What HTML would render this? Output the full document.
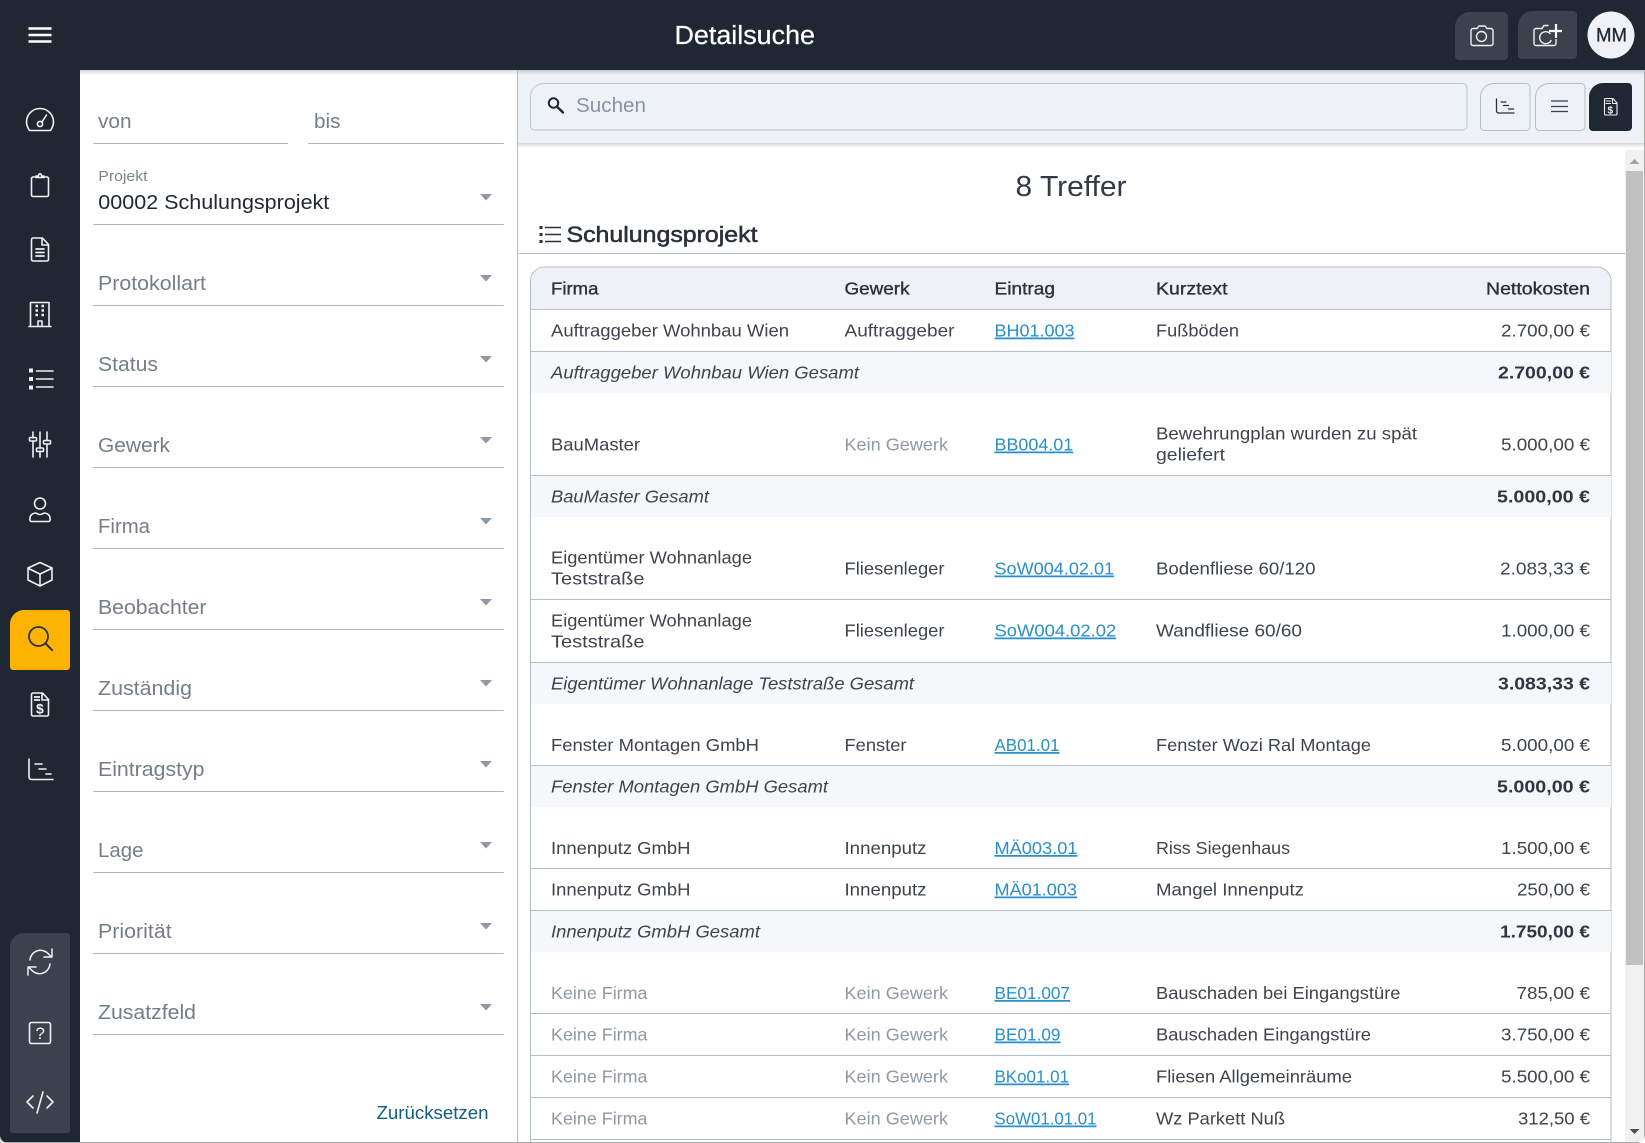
<!DOCTYPE html>
<html lang="de"><head><meta charset="utf-8"><title>Detailsuche</title>
<style>
html,body{margin:0;padding:0;background:#fff;overflow:hidden;width:1645px;height:1143px}
svg{position:absolute;left:0;top:0;display:block}
text{font-family:"Liberation Sans",sans-serif;font-size:17.5px;fill:#3d444e}
.f{font-size:20.5px;fill:#737e8a}
.h{fill:#2a313b;stroke:#2a313b;stroke-width:.35px}
.g{fill:#8e99a6}
.a{fill:#2a8fc9;text-decoration:underline}
.i{font-style:italic}
.b{font-weight:bold;fill:#2f3640}
.ic{fill:none;stroke:#eef1f6;stroke-width:1.6;stroke-linecap:round;stroke-linejoin:round}
.dk{fill:none;stroke:#2a313b;stroke-width:1.5;stroke-linecap:round;stroke-linejoin:round}
</style></head><body>
<svg width="1645" height="1143" viewBox="0 0 1645 1143" xmlns="http://www.w3.org/2000/svg">
<defs>
<linearGradient id="s1" x1="0" y1="0" x2="0" y2="1"><stop offset="0" stop-color="#000" stop-opacity=".16"/><stop offset="1" stop-color="#000" stop-opacity="0"/></linearGradient>
</defs>
<rect width="1645" height="1143" fill="#1f2732"/>
<path d="M80 70H1645V1143H80Z" fill="#fff"/>
<rect x="518" y="70" width="1127" height="73" fill="#eef1f6"/>
<rect x="80" y="70" width="1565" height="5" fill="url(#s1)"/>
<rect x="518" y="143" width="1127" height="5" fill="url(#s1)"/>
<rect x="517" y="70" width="1" height="1073" fill="#b5bfca"/>

<!-- header -->
<text x="674.5" y="44" style="font-size:25.5px;fill:#fff;stroke:#fff;stroke-width:.25px" textLength="140.5" lengthAdjust="spacingAndGlyphs">Detailsuche</text>
<path d="M1470 12H1503a5 5 0 0 1 5 5V56a4 4 0 0 1-4 4H1459a4 4 0 0 1-4-4V27a15 15 0 0 1 15-15Z" fill="#3a424d"/>
<path d="M1533 11H1573a4 4 0 0 1 4 4V55a4 4 0 0 1-4 4H1522a4 4 0 0 1-4-4V26a15 15 0 0 1 15-15Z" fill="#3a424d"/>
<circle cx="1611" cy="35" r="23.5" fill="#eef1f6"/>
<text x="1596" y="41.5" style="font-size:19px;fill:#1f2732;stroke:#1f2732;stroke-width:.3px" textLength="31" lengthAdjust="spacingAndGlyphs">MM</text>
<path class="ic" d="M1471 30.5a2 2 0 0 1 2-2h4l2-2.5h6l2 2.5h4a2 2 0 0 1 2 2v13a2 2 0 0 1-2 2h-18a2 2 0 0 1-2-2Z" style="stroke-width:1.4"/>
<circle class="ic" cx="1481.5" cy="36.5" r="5" style="stroke-width:1.4"/>
<path class="ic" d="M1548 25.5h-4l-2 3h-6a2 2 0 0 0-2 2v13a2 2 0 0 0 2 2h18a2 2 0 0 0 2-2v-4M1550 33.5a6 6 0 1 0 1 7" style="stroke-width:1.4"/>
<path d="M1556 24v14M1549 31h13" fill="none" stroke="#fff" stroke-width="2.2"/>

<!-- sidebar -->
<path d="M24 933H67a3 3 0 0 1 3 3V1130a3 3 0 0 1-3 3H13a3 3 0 0 1-3-3V947a14 14 0 0 1 14-14Z" fill="#3a424d"/>
<path d="M28.5 28.5h23M28.5 35h23M28.5 41.5h23" fill="none" stroke="#fff" stroke-width="2.4"/>
<g class="ic">
<path d="M29.5 130.5C27.5 127.5 26.5 125 26.5 122C26.5 114.5 32.5 108.5 40 108.5S53.5 114.5 53.5 122C53.5 125 52.5 127.5 50.5 130.5Z"/>
<circle cx="40" cy="124" r="2.6"/><path d="M42 122L46.5 115"/>
<path d="M36 177h-3a1.500 1.500 0 0 0-1.500 1.500v16.500a1.500 1.500 0 0 0 1.500 1.500h14a1.500 1.500 0 0 0 1.500-1.500v-16.500a1.500 1.500 0 0 0-1.500-1.500h-3M36 177.500v-1.500h2.500c0-3 3-3 3 0h2.500v1.500Z"/>
<path d="M33 238h9.500l6 6.500v15a1.500 1.500 0 0 1-1.500 1.500h-14a1.500 1.500 0 0 1-1.500-1.500v-20a1.500 1.500 0 0 1 1.500-1.500ZM42 238.500v6.500h6.500"/>
<path d="M36 249h8M36 252.500h8M36 256h8" style="stroke-width:1.700"/>
<path d="M30.500 326.500v-24h18.500v24M29 326.500h22M38 326v-5h4v5"/>
<path d="M35.500 306h2.500M41.500 306h2.500M35.500 310.500h2.500M41.500 310.500h2.500M35.500 315h2.500M41.500 315h2.500" style="stroke-width:2.600;stroke-linecap:butt"/>
<path d="M36.500 371h16.500M36.500 379h16.500M36.500 387h16.500"/>
<path d="M33 432v6M33 441v16M40 432v16M40 451v6M47 432v8M47 444v13"/>
<rect x="29.500" y="437.500" width="7" height="3.500" rx="1"/><rect x="36.500" y="448" width="7" height="3.500" rx="1"/><rect x="43.500" y="440.500" width="7" height="3.500" rx="1"/>
<circle cx="40" cy="503.500" r="5.500"/><path d="M31.500 521.500h17a1.500 1.500 0 0 0 1.500-1.500v-2c0-3-3-5-6-5-1.500 1-2.500 1.500-4 1.500s-2.500-.5-4-1.500c-3 0-6 2-6 5v2a1.500 1.500 0 0 0 1.500 1.500Z"/>
<path d="M40 562.500L52 568v12l-12 6-12-6v-12ZM28.500 568.500L40 574l11.500-5.500M40 574v11.500"/>
<path d="M33 693h9.500l6 6.500v15a1.500 1.500 0 0 1-1.500 1.500h-14a1.500 1.500 0 0 1-1.500-1.500v-20a1.500 1.500 0 0 1 1.500-1.500ZM42 693.500v6.500h6.500"/>
<path d="M34 697h6M34 700h6" style="stroke-width:1.700;stroke-linecap:butt"/>
<path d="M29 759v18a2.500 2.500 0 0 0 2.500 2.500h21.500M35 764h7M39 769h7M46 774h5"/>
<path d="M30 960a10.500 10.500 0 0 1 18-6.500l3.500 3.500M52 949v8h-8M50 964a10.500 10.500 0 0 1-18 6.500l-3.500-3.500M28 975v-8h8" style="stroke-width:1.500"/>
<rect x="29.500" y="1022.500" width="21" height="21" rx="2"/>
<path d="M33 1096l-6 6 6 6M47 1096l6 6-6 6M43 1092l-6 21"/>
</g>
<path d="M29 368.500h4v4h-4ZM29 377h4v4h-4ZM29 385.500h4v4h-4Z" fill="#eef1f6"/>
<path d="M24 610H67a3 3 0 0 1 3 3V667a3 3 0 0 1-3 3H13a3 3 0 0 1-3-3V624a14 14 0 0 1 14-14Z" fill="#ffb300"/>
<circle cx="38.500" cy="636.500" r="9.500" fill="none" stroke="#2a313b" stroke-width="1.800"/><path d="M45.500 643.500L52 650" stroke="#2a313b" stroke-width="2" stroke-linecap="round"/>
<text x="36" y="713.500" style="font-size:14px;fill:#eef1f6;font-weight:bold">$</text>
<text x="35.500" y="1039" style="font-size:17px;fill:#eef1f6">?</text>

<!-- form -->
<g fill="#aeb8c5">
<rect x="93" y="143" width="195" height="1"/><rect x="308" y="143" width="196" height="1"/>
<rect x="93" y="224" width="411" height="1"/><rect x="93" y="305" width="411" height="1"/><rect x="93" y="386" width="411" height="1"/><rect x="93" y="467" width="411" height="1"/><rect x="93" y="548" width="411" height="1"/><rect x="93" y="629" width="411" height="1"/><rect x="93" y="710" width="411" height="1"/><rect x="93" y="791" width="411" height="1"/><rect x="93" y="872" width="411" height="1"/><rect x="93" y="953" width="411" height="1"/><rect x="93" y="1034" width="411" height="1"/>
</g>
<g fill="#8f99a6">
<path d="M480 194h12l-6 6.500Z"/><path d="M480 275h12l-6 6.500Z"/><path d="M480 356h12l-6 6.500Z"/><path d="M480 437h12l-6 6.500Z"/><path d="M480 518h12l-6 6.500Z"/><path d="M480 599h12l-6 6.500Z"/><path d="M480 680h12l-6 6.500Z"/><path d="M480 761h12l-6 6.500Z"/><path d="M480 842h12l-6 6.500Z"/><path d="M480 923h12l-6 6.500Z"/><path d="M480 1004h12l-6 6.500Z"/>
</g>
<text class="f" x="98" y="128" textLength="33.500" lengthAdjust="spacingAndGlyphs">von</text>
<text class="f" x="314" y="128" textLength="26.500" lengthAdjust="spacingAndGlyphs">bis</text>
<text x="98.300" y="181" style="font-size:15px;fill:#7a8592" textLength="49.200" lengthAdjust="spacingAndGlyphs">Projekt</text>
<text class="f" x="98.300" y="209" style="fill:#1f2732" textLength="231" lengthAdjust="spacingAndGlyphs">00002 Schulungsprojekt</text>
<text class="f" x="98" y="290" textLength="108" lengthAdjust="spacingAndGlyphs">Protokollart</text>
<text class="f" x="98" y="371" textLength="60" lengthAdjust="spacingAndGlyphs">Status</text>
<text class="f" x="98" y="452" textLength="72" lengthAdjust="spacingAndGlyphs">Gewerk</text>
<text class="f" x="98" y="533" textLength="52" lengthAdjust="spacingAndGlyphs">Firma</text>
<text class="f" x="98" y="614" textLength="108.500" lengthAdjust="spacingAndGlyphs">Beobachter</text>
<text class="f" x="98" y="695" textLength="94" lengthAdjust="spacingAndGlyphs">Zuständig</text>
<text class="f" x="98" y="776" textLength="106.500" lengthAdjust="spacingAndGlyphs">Eintragstyp</text>
<text class="f" x="98" y="857" textLength="45.500" lengthAdjust="spacingAndGlyphs">Lage</text>
<text class="f" x="98" y="938" textLength="73.700" lengthAdjust="spacingAndGlyphs">Priorität</text>
<text class="f" x="98" y="1019" textLength="98" lengthAdjust="spacingAndGlyphs">Zusatzfeld</text>
<text x="376.500" y="1119" style="font-size:18px;fill:#0f5d88" textLength="112" lengthAdjust="spacingAndGlyphs">Zurücksetzen</text>

<!-- toolbar -->
<path d="M543.500 83.500H1463a4 4 0 0 1 4 4V126a4 4 0 0 1-4 4H534.500a4 4 0 0 1-4-4V96.500a13 13 0 0 1 13-13Z" fill="#eef1f6" stroke="#bcc5d0"/>
<circle cx="553.500" cy="103" r="4.700" fill="none" stroke="#1f2732" stroke-width="2"/><path d="M557.300 107L563 112.500" stroke="#1f2732" stroke-width="2.400" stroke-linecap="round"/>
<text class="f" x="576" y="112" style="fill:#8a94a0" textLength="70" lengthAdjust="spacingAndGlyphs">Suchen</text>
<path d="M1494 83.500H1526a4 4 0 0 1 4 4V126.500a4 4 0 0 1-4 4H1484.500a4 4 0 0 1-4-4V97a13.500 13.500 0 0 1 13.500-13.500Z" fill="#eef1f6" stroke="#b5bfca"/>
<path d="M1549 83.500H1581a4 4 0 0 1 4 4V126.500a4 4 0 0 1-4 4H1539.500a4 4 0 0 1-4-4V97a13.500 13.500 0 0 1 13.500-13.500Z" fill="#eef1f6" stroke="#b5bfca"/>
<path d="M1603 83H1628a4 4 0 0 1 4 4V127a4 4 0 0 1-4 4H1593a4 4 0 0 1-4-4V97a14 14 0 0 1 14-14Z" fill="#1f2732"/>
<path class="dk" d="M1496.500 99v12a2 2 0 0 0 2 2h15.500M1501 102h5M1503.500 105.500h5M1508.500 109h5" style="stroke-width:1.300"/>
<path d="M1551 101h17M1551 106.500h17M1551 111.500h17" stroke="#3a424d" stroke-width="1.300" fill="none"/>
<path class="ic" d="M1605.500 98.500h7.500l4 4.500v11a1 1 0 0 1-1 1h-10.500a1 1 0 0 1-1-1v-14.500a1 1 0 0 1 1-1ZM1612.500 99v4.500h4.500M1606 101h4.500M1606 103.500h4.500" style="stroke-width:1.100"/>
<text x="1607.500" y="113.500" style="font-size:10px;fill:#eef1f6;font-weight:bold">$</text>

<!-- heading -->
<text x="1015.500" y="196" style="font-size:29px;fill:#333a44" textLength="111" lengthAdjust="spacingAndGlyphs">8 Treffer</text>
<path d="M545 227.500h16M545 234.500h16M545 241.500h16" stroke="#2a313b" stroke-width="1.600" fill="none"/>
<path d="M539.500 226h3v3h-3ZM539.500 233h3v3h-3ZM539.500 240h3v3h-3Z" fill="#2a313b"/>
<text x="566.500" y="242" style="font-size:22.500px;fill:#2a313b;stroke:#2a313b;stroke-width:.55px" textLength="191" lengthAdjust="spacingAndGlyphs">Schulungsprojekt</text>
<rect x="518" y="253" width="1107" height="1" fill="#b5bfca"/>

<!-- table -->
<path d="M530.500 1143V281a14 14 0 0 1 14-14H1597a14 14 0 0 1 14 14V1143" fill="#fff" stroke="#b5bfca"/>
<path d="M531 309V281a13.500 13.500 0 0 1 13.500-13.500H1597a13.500 13.500 0 0 1 13.500 13.500V309Z" fill="#eef1f6"/>
<g fill="#f6f7fa">
<rect x="531" y="351" width="1080" height="42"/><rect x="531" y="475" width="1080" height="42"/><rect x="531" y="662" width="1080" height="42"/><rect x="531" y="765" width="1080" height="42"/><rect x="531" y="910" width="1080" height="42"/>
</g>
<g fill="#b5bfca">
<rect x="531" y="309" width="1080" height="1"/><rect x="531" y="351" width="1080" height="1"/><rect x="531" y="475" width="1080" height="1"/><rect x="531" y="599" width="1080" height="1"/><rect x="531" y="662" width="1080" height="1"/><rect x="531" y="765" width="1080" height="1"/><rect x="531" y="868" width="1080" height="1"/><rect x="531" y="910" width="1080" height="1"/><rect x="531" y="1013" width="1080" height="1"/><rect x="531" y="1055" width="1080" height="1"/><rect x="531" y="1097" width="1080" height="1"/><rect x="531" y="1139" width="1080" height="1"/>
</g>
<text class="h" x="551" y="294.500" textLength="47.500" lengthAdjust="spacingAndGlyphs">Firma</text>
<text class="h" x="844.500" y="294.500" textLength="65" lengthAdjust="spacingAndGlyphs">Gewerk</text>
<text class="h" x="994.500" y="294.500" textLength="60.500" lengthAdjust="spacingAndGlyphs">Eintrag</text>
<text class="h" x="1156" y="294.500" textLength="71.500" lengthAdjust="spacingAndGlyphs">Kurztext</text>
<text class="h" x="1486" y="294.500" textLength="104" lengthAdjust="spacingAndGlyphs">Nettokosten</text>

<text x="551" y="336.500" textLength="238" lengthAdjust="spacingAndGlyphs">Auftraggeber Wohnbau Wien</text>
<text x="844.500" y="336.500" textLength="110" lengthAdjust="spacingAndGlyphs">Auftraggeber</text>
<text class="a" x="994.500" y="336.500" textLength="80" lengthAdjust="spacingAndGlyphs">BH01.003</text>
<text x="1156" y="336.500" textLength="83" lengthAdjust="spacingAndGlyphs">Fußböden</text>
<text x="1501" y="336.500" textLength="89" lengthAdjust="spacingAndGlyphs">2.700,00 €</text>
<text class="i" x="551" y="378.500" textLength="308" lengthAdjust="spacingAndGlyphs">Auftraggeber Wohnbau Wien Gesamt</text>
<text class="b" x="1498" y="378.500" textLength="92" lengthAdjust="spacingAndGlyphs">2.700,00 €</text>

<text x="551" y="450.500" textLength="89" lengthAdjust="spacingAndGlyphs">BauMaster</text>
<text class="g" x="844.500" y="450.500" textLength="103.500" lengthAdjust="spacingAndGlyphs">Kein Gewerk</text>
<text class="a" x="994.500" y="450.500" textLength="78.700" lengthAdjust="spacingAndGlyphs">BB004.01</text>
<text x="1156" y="439.500" textLength="261" lengthAdjust="spacingAndGlyphs">Bewehrungplan wurden zu spät</text>
<text x="1156" y="460.500" textLength="69" lengthAdjust="spacingAndGlyphs">geliefert</text>
<text x="1501" y="450.500" textLength="89" lengthAdjust="spacingAndGlyphs">5.000,00 €</text>
<text class="i" x="551" y="502.500" textLength="158" lengthAdjust="spacingAndGlyphs">BauMaster Gesamt</text>
<text class="b" x="1497" y="502.500" textLength="93" lengthAdjust="spacingAndGlyphs">5.000,00 €</text>

<text x="551" y="563.500" textLength="201" lengthAdjust="spacingAndGlyphs">Eigentümer Wohnanlage</text>
<text x="551" y="584.500" textLength="93.500" lengthAdjust="spacingAndGlyphs">Teststraße</text>
<text x="844.500" y="574.500" textLength="100" lengthAdjust="spacingAndGlyphs">Fliesenleger</text>
<text class="a" x="994.500" y="574.500" textLength="119.600" lengthAdjust="spacingAndGlyphs">SoW004.02.01</text>
<text x="1156" y="574.500" textLength="159.500" lengthAdjust="spacingAndGlyphs">Bodenfliese 60/120</text>
<text x="1500" y="574.500" textLength="90" lengthAdjust="spacingAndGlyphs">2.083,33 €</text>

<text x="551" y="626.500" textLength="201" lengthAdjust="spacingAndGlyphs">Eigentümer Wohnanlage</text>
<text x="551" y="647.500" textLength="93.500" lengthAdjust="spacingAndGlyphs">Teststraße</text>
<text x="844.500" y="636.500" textLength="100" lengthAdjust="spacingAndGlyphs">Fliesenleger</text>
<text class="a" x="994.500" y="636.500" textLength="121.700" lengthAdjust="spacingAndGlyphs">SoW004.02.02</text>
<text x="1156" y="636.500" textLength="146" lengthAdjust="spacingAndGlyphs">Wandfliese 60/60</text>
<text x="1501" y="636.500" textLength="89" lengthAdjust="spacingAndGlyphs">1.000,00 €</text>
<text class="i" x="551" y="689.500" textLength="363" lengthAdjust="spacingAndGlyphs">Eigentümer Wohnanlage Teststraße Gesamt</text>
<text class="b" x="1498" y="689.500" textLength="92" lengthAdjust="spacingAndGlyphs">3.083,33 €</text>

<text x="551" y="751" textLength="208" lengthAdjust="spacingAndGlyphs">Fenster Montagen GmbH</text>
<text x="844.500" y="751" textLength="62" lengthAdjust="spacingAndGlyphs">Fenster</text>
<text class="a" x="994.500" y="751" textLength="65" lengthAdjust="spacingAndGlyphs">AB01.01</text>
<text x="1156" y="751" textLength="215" lengthAdjust="spacingAndGlyphs">Fenster Wozi Ral Montage</text>
<text x="1501" y="751" textLength="89" lengthAdjust="spacingAndGlyphs">5.000,00 €</text>
<text class="i" x="551" y="792.500" textLength="277" lengthAdjust="spacingAndGlyphs">Fenster Montagen GmbH Gesamt</text>
<text class="b" x="1497" y="792.500" textLength="93" lengthAdjust="spacingAndGlyphs">5.000,00 €</text>

<text x="551" y="854" textLength="139.500" lengthAdjust="spacingAndGlyphs">Innenputz GmbH</text>
<text x="844.500" y="854" textLength="82" lengthAdjust="spacingAndGlyphs">Innenputz</text>
<text class="a" x="994.500" y="854" textLength="83" lengthAdjust="spacingAndGlyphs">MÄ003.01</text>
<text x="1156" y="854" textLength="134" lengthAdjust="spacingAndGlyphs">Riss Siegenhaus</text>
<text x="1501" y="854" textLength="89" lengthAdjust="spacingAndGlyphs">1.500,00 €</text>
<text x="551" y="895.500" textLength="139.500" lengthAdjust="spacingAndGlyphs">Innenputz GmbH</text>
<text x="844.500" y="895.500" textLength="82" lengthAdjust="spacingAndGlyphs">Innenputz</text>
<text class="a" x="994.500" y="895.500" textLength="82.500" lengthAdjust="spacingAndGlyphs">MÄ01.003</text>
<text x="1156" y="895.500" textLength="148" lengthAdjust="spacingAndGlyphs">Mangel Innenputz</text>
<text x="1517" y="895.500" textLength="73" lengthAdjust="spacingAndGlyphs">250,00 €</text>
<text class="i" x="551" y="937.500" textLength="209" lengthAdjust="spacingAndGlyphs">Innenputz GmbH Gesamt</text>
<text class="b" x="1500" y="937.500" textLength="90" lengthAdjust="spacingAndGlyphs">1.750,00 €</text>

<text class="g" x="551" y="999" textLength="96.500" lengthAdjust="spacingAndGlyphs">Keine Firma</text>
<text class="g" x="844.500" y="999" textLength="103.500" lengthAdjust="spacingAndGlyphs">Kein Gewerk</text>
<text class="a" x="994.500" y="999" textLength="75.500" lengthAdjust="spacingAndGlyphs">BE01.007</text>
<text x="1156" y="999" textLength="244.500" lengthAdjust="spacingAndGlyphs">Bauschaden bei Eingangstüre</text>
<text x="1516.500" y="999" textLength="73.500" lengthAdjust="spacingAndGlyphs">785,00 €</text>

<text class="g" x="551" y="1040.500" textLength="96.500" lengthAdjust="spacingAndGlyphs">Keine Firma</text>
<text class="g" x="844.500" y="1040.500" textLength="103.500" lengthAdjust="spacingAndGlyphs">Kein Gewerk</text>
<text class="a" x="994.500" y="1040.500" textLength="66" lengthAdjust="spacingAndGlyphs">BE01.09</text>
<text x="1156" y="1040.500" textLength="215" lengthAdjust="spacingAndGlyphs">Bauschaden Eingangstüre</text>
<text x="1501" y="1040.500" textLength="89" lengthAdjust="spacingAndGlyphs">3.750,00 €</text>

<text class="g" x="551" y="1082.500" textLength="96.500" lengthAdjust="spacingAndGlyphs">Keine Firma</text>
<text class="g" x="844.500" y="1082.500" textLength="103.500" lengthAdjust="spacingAndGlyphs">Kein Gewerk</text>
<text class="a" x="994.500" y="1082.500" textLength="74.500" lengthAdjust="spacingAndGlyphs">BKo01.01</text>
<text x="1156" y="1082.500" textLength="196" lengthAdjust="spacingAndGlyphs">Fliesen Allgemeinräume</text>
<text x="1501" y="1082.500" textLength="89" lengthAdjust="spacingAndGlyphs">5.500,00 €</text>

<text class="g" x="551" y="1124.500" textLength="96.500" lengthAdjust="spacingAndGlyphs">Keine Firma</text>
<text class="g" x="844.500" y="1124.500" textLength="103.500" lengthAdjust="spacingAndGlyphs">Kein Gewerk</text>
<text class="a" x="994.500" y="1124.500" textLength="102" lengthAdjust="spacingAndGlyphs">SoW01.01.01</text>
<text x="1156" y="1124.500" textLength="129" lengthAdjust="spacingAndGlyphs">Wz Parkett Nuß</text>
<text x="1518" y="1124.500" textLength="72" lengthAdjust="spacingAndGlyphs">312,50 €</text>

<!-- scrollbar -->
<rect x="1625" y="150" width="19" height="993" fill="#f1f1f1"/>
<rect x="1626" y="171" width="17" height="794" fill="#c1c1c1"/>
<path d="M1629.500 164h10l-5-5Z" fill="#a3a3a3"/><path d="M1629.500 1129h10l-5 5Z" fill="#505050"/>

<!-- window frame -->
<rect x="0" y="1142" width="1645" height="1" fill="#a9a9a9"/>
<rect x="1644" y="70" width="1" height="1073" fill="#a9a9a9"/>
<path d="M0 1135v8h8a8 8 0 0 1-8-8Z" fill="#ddd"/><path d="M1645 1135v8h-8a8 8 0 0 0 8-8Z" fill="#fff"/>
</svg>
</body></html>
